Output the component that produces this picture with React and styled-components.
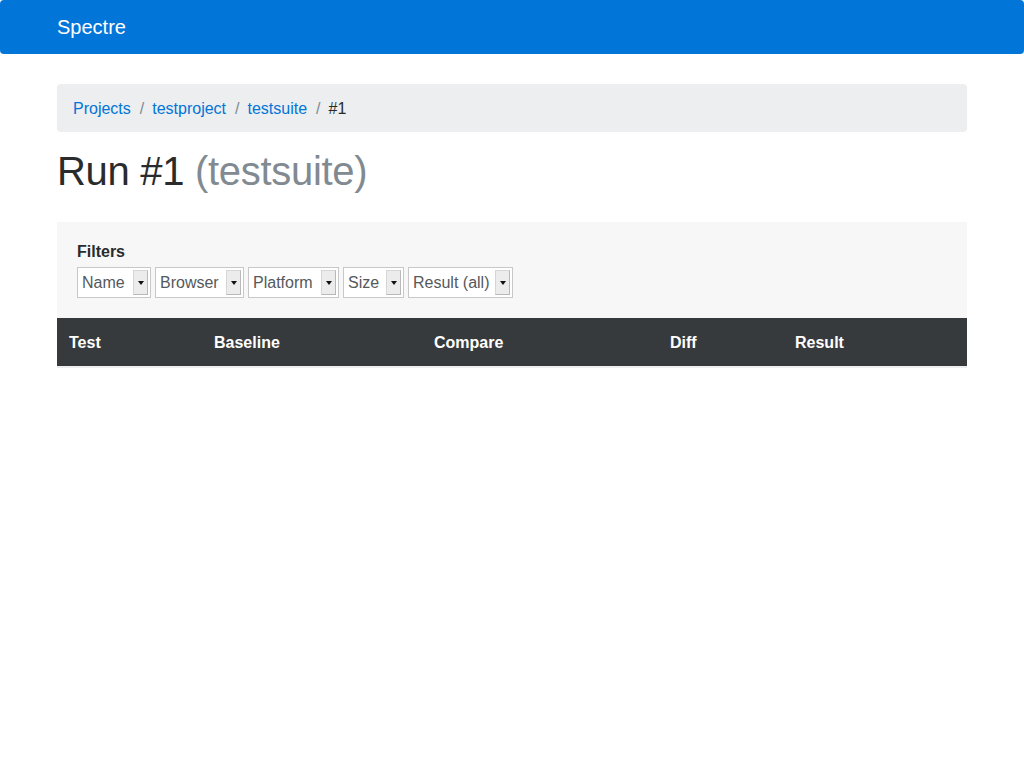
import React from "react";
import styled, { createGlobalStyle } from "styled-components";

const Global = createGlobalStyle`
  html, body { margin: 0; padding: 0; background: #fff; }
  body {
    font-family: "Liberation Sans", Arial, Helvetica, sans-serif;
    font-size: 16px;
    line-height: 1.5;
    color: #292b2c;
  }
  * { box-sizing: border-box; }
`;

const Navbar = styled.nav`
  background: #0275d8;
  height: 54px;
  border-radius: 4px;
  display: flex;
  align-items: center;
`;

const Container = styled.div`
  width: 940px;
  margin: 0 auto;
  padding: 0 15px;
`;

const Brand = styled.a`
  color: #fff;
  font-size: 20px;
  line-height: 1.5;
  text-decoration: none;
  display: inline-block;
  margin-top: -1px;
`;

const Main = styled(Container)`
  padding-top: 30px;
`;

const Breadcrumb = styled.ol`
  list-style: none;
  margin: 0 0 16px;
  padding: 13px 16px 11px;
  background: #eceeef;
  border-radius: 4px;
  display: flex;
  height: 48px;
  & > li + li::before {
    content: "/";
    color: #818a91;
    padding: 0 8px 0 9px;
  }
`;

const Crumb = styled.li`
  color: ${(p) => (p.$active ? "#292b2c" : "#0275d8")};
`;

const Heading = styled.h1`
  margin: 0 0 29px;
  font-size: 40px;
  font-weight: 400;
  line-height: 1.1;
  color: #292b2c;
  padding-top: 1px;
  letter-spacing: -0.3px;
`;

const Muted = styled.span`
  color: #818a91;
`;

const FilterBox = styled.div`
  background: #f7f7f7;
  padding: 19px 20px 20px;
`;

const FilterTitle = styled.div`
  font-weight: 700;
  font-size: 16px;
  line-height: 22px;
  margin-bottom: 4px;
`;

const FilterRow = styled.div`
  display: flex;
  gap: 4px;
`;

const Select = styled.div`
  display: flex;
  align-items: center;
  height: 31px;
  background: #fff;
  border: 1px solid #c8c8c8;
  padding: 0 2px 0 4px;
  color: #55595c;
  font-size: 16px;
  width: ${(p) => p.$w}px;
`;

const SelectLabel = styled.span`
  flex: 1;
  white-space: nowrap;
`;

const Arrow = styled.span`
  width: 15px;
  height: 25px;
  background: #ececec;
  border: 1px solid #d6d6d6;
  border-right-color: #b8b8b8;
  border-bottom-color: #b8b8b8;
  display: flex;
  align-items: center;
  justify-content: center;
  &::after {
    content: "";
    border-left: 3.5px solid transparent;
    border-right: 3.5px solid transparent;
    border-top: 4px solid #111;
  }
`;

const Table = styled.table`
  width: 100%;
  border-collapse: collapse;
`;

const Th = styled.th`
  background: #373a3c;
  color: #fff;
  text-align: left;
  font-weight: 700;
  font-size: 16px;
  padding: 13px 12px 11px;
  height: 48px;
  border-bottom: 2px solid #eceeef;
  width: ${(p) => p.$w}px;
`;

const filters = [
  { label: "Name", w: 74 },
  { label: "Browser", w: 89 },
  { label: "Platform", w: 91 },
  { label: "Size", w: 61 },
  { label: "Result (all)", w: 105 },
];

const cols = [
  { label: "Test", w: 145 },
  { label: "Baseline", w: 220 },
  { label: "Compare", w: 236 },
  { label: "Diff", w: 125 },
  { label: "Result" },
];

export default function App() {
  return (
    <>
      <Global />
      <Navbar>
        <Container>
          <Brand href="#">Spectre</Brand>
        </Container>
      </Navbar>
      <Main>
        <Breadcrumb>
          <Crumb>Projects</Crumb>
          <Crumb>testproject</Crumb>
          <Crumb>testsuite</Crumb>
          <Crumb $active>#1</Crumb>
        </Breadcrumb>
        <Heading>
          Run #1 <Muted>(testsuite)</Muted>
        </Heading>
        <FilterBox>
          <FilterTitle>Filters</FilterTitle>
          <FilterRow>
            {filters.map((f) => (
              <Select key={f.label} $w={f.w}>
                <SelectLabel>{f.label}</SelectLabel>
                <Arrow />
              </Select>
            ))}
          </FilterRow>
        </FilterBox>
        <Table>
          <thead>
            <tr>
              {cols.map((c) => (
                <Th key={c.label} $w={c.w}>
                  {c.label}
                </Th>
              ))}
            </tr>
          </thead>
        </Table>
      </Main>
    </>
  );
}
